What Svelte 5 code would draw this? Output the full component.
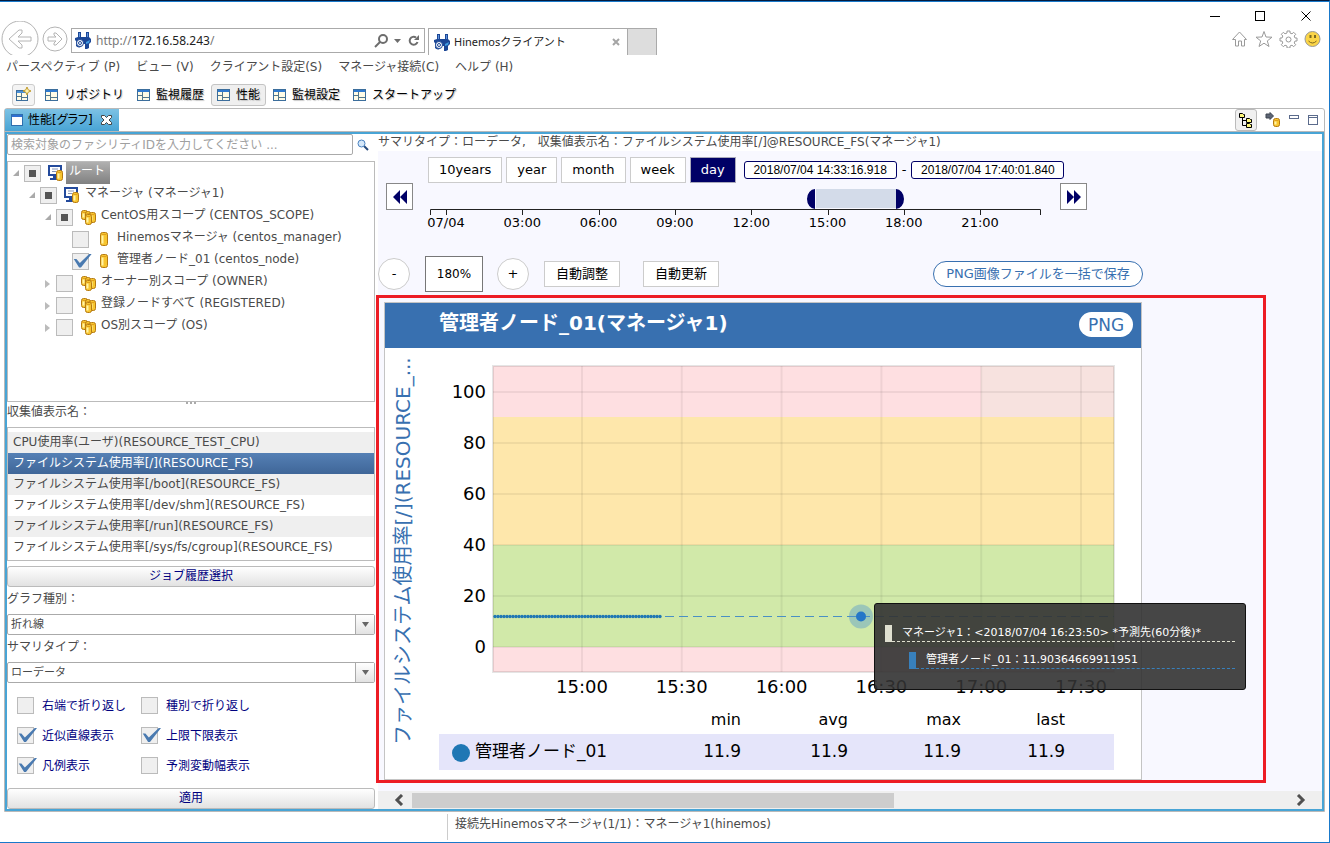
<script>
  const menus = ['パースペクティブ (P)', 'ビュー (V)', 'クライアント設定(S)', 'マネージャ接続(C)', 'ヘルプ (H)'];

  const perspectives = ['リポジトリ', '監視履歴', '性能', '監視設定', 'スタートアップ'];
  let activePerspective = $state('性能');

  let tree = $state([
    { label: 'ルート', depth: 0, open: true, icon: 'server', check: 'some', selected: true },
    { label: 'マネージャ (マネージャ1)', depth: 1, open: true, icon: 'server', check: 'some' },
    { label: 'CentOS用スコープ (CENTOS_SCOPE)', depth: 2, open: true, icon: 'scope', check: 'some' },
    { label: 'Hinemosマネージャ (centos_manager)', depth: 3, icon: 'node', check: 'none' },
    { label: '管理者ノード_01 (centos_node)', depth: 3, icon: 'node', check: 'all' },
    { label: 'オーナー別スコープ (OWNER)', depth: 2, open: false, icon: 'scope', check: 'none' },
    { label: '登録ノードすべて (REGISTERED)', depth: 2, open: false, icon: 'scope', check: 'none' },
    { label: 'OS別スコープ (OS)', depth: 2, open: false, icon: 'scope', check: 'none' }
  ]);

  const metrics = [
    'CPU使用率(ユーザ)(RESOURCE_TEST_CPU)',
    'ファイルシステム使用率[/](RESOURCE_FS)',
    'ファイルシステム使用率[/boot](RESOURCE_FS)',
    'ファイルシステム使用率[/dev/shm](RESOURCE_FS)',
    'ファイルシステム使用率[/run](RESOURCE_FS)',
    'ファイルシステム使用率[/sys/fs/cgroup](RESOURCE_FS)'
  ];
  let metric = $state(1);

  let options = $state([
    { label: '右端で折り返し', on: false },
    { label: '種別で折り返し', on: false },
    { label: '近似直線表示', on: true },
    { label: '上限下限表示', on: true },
    { label: '凡例表示', on: true },
    { label: '予測変動幅表示', on: false }
  ]);

  const ranges = ['10years', 'year', 'month', 'week', 'day'];
  let range = $state('day');

  const dayTicks = ['07/04', '03:00', '06:00', '09:00', '12:00', '15:00', '18:00', '21:00'];

  // Chart scales
  const yTicks = [100, 80, 60, 40, 20, 0];
  const xTicks = ['15:00', '15:30', '16:00', '16:30', '17:00', '17:30'];
  const py = (v) => 299 - v * 2.55;
  const px = (i) => 197 + i * 99.8;
  const samples = Array.from({ length: 56 }, (_, i) => 110 + i * 3);

  const legend = [['min', '11.9'], ['avg', '11.9'], ['max', '11.9'], ['last', '11.9']];
</script>

{#snippet hinemosIcon()}
  <svg class="fixed" width="17" height="17" viewBox="0 0 17 17">
    <path d="M3 0h3v5h5V0h3v5l2 2v3l-2 2v4l-2 1h-2v-5H8a4 4 0 0 1-7 2V9L0 8V6l3-1z" fill="#1c4796" />
    <path d="M4 1h1v4H4zM12 1h1v4h-1z" fill="#5f93dd" />
    <path d="M11 10l4-2-1 3-3 1z" fill="#3f9be0" />
    <circle cx="5" cy="11" r="3.5" fill="#fff" stroke="#1c4796" />
    <circle cx="5" cy="11" r="1.5" fill="none" stroke="#1c4796" />
  </svg>
{/snippet}

{#snippet gridIcon()}
  <svg class="fixed" width="13" height="12" viewBox="0 0 13 12">
    <rect x="0.5" y="0.5" width="12" height="11" fill="#fffbe6" stroke="#3c6e9c" />
    <path d="M1 2h11" stroke="#2f7ad0" stroke-width="2" />
    <path d="M5.5 3v8M1 6.5h4M6 8.5h6" stroke="#54788c" />
  </svg>
{/snippet}

{#snippet cylinder(x, y, w, h)}
  <rect {x} {y} width={w} height={h} rx="2" fill="#f7c52f" stroke="#b67a10" />
  <path d="M{x + 2} {y + 3}v{h - 5}" stroke="#fff3a8" stroke-width="2" />
  <path d="M{x + 1} {y + 2}h{w - 2}" stroke="#e0a01c" />
{/snippet}

{#snippet treeIcon(kind)}
  <svg class="fixed" width="16" height="16" viewBox="0 0 16 16">
    {#if kind === 'server'}
      <rect x="1" y="1" width="12" height="9" fill="#fff" stroke="#234a9c" stroke-width="2" />
      <path d="M4 4h6M4 6.5h4" stroke="#8393b8" />
      <path d="M5 11h4v2H5zM2 13h8v2H2z" fill="#234a9c" />
      {@render cylinder(8.5, 5.5, 6, 10)}
    {:else if kind === 'scope'}
      {@render cylinder(1.5, 1.5, 6, 9)}
      {@render cylinder(5.5, 2.5, 5, 9)}
      {@render cylinder(9.5, 3.5, 6, 10)}
      {@render cylinder(5.5, 5.5, 6, 10)}
    {:else}
      {@render cylinder(4.5, 1.5, 7, 13)}
    {/if}
  </svg>
{/snippet}

<div class="window">
  <header class="browser">
    <button class="plain" aria-label="戻る">
      <svg width="40" height="34" viewBox="0 0 40 34">
        <circle cx="20" cy="18" r="18" fill="#fff" stroke="#b4b4b4" />
        <path d="M9 18l10-9h3v3l-4 4h13v4H18l4 4v3h-3z" fill="#fff" stroke="#b4b4b4" />
      </svg>
    </button>
    <button class="plain forward" aria-label="進む">
      <svg width="26" height="26" viewBox="0 0 26 26">
        <circle cx="13" cy="13" r="12" fill="#fff" stroke="#b4b4b4" />
        <path d="M20 13l-6-6h-2v2l2 2H6v4h8l-2 2v2h2z" fill="#fff" stroke="#b4b4b4" />
      </svg>
    </button>
    <div class="address">
      {@render hinemosIcon()}
      <span class="url">http://<b>172.16.58.243</b>/</span>
      <svg class="fixed" width="46" height="16" viewBox="0 0 46 16" fill="none" stroke="#6d6d6d">
        <circle cx="9" cy="6" r="4" stroke-width="2" />
        <path d="M6 9l-5 5" stroke-width="2" />
        <path d="M20 6h7l-3.5 4z" fill="#6d6d6d" stroke="none" />
        <path d="M42 4.500a4 4 0 1 0 1.500 4.500" stroke-width="2" />
        <path d="M45 2v5h-5z" fill="#6d6d6d" stroke="none" />
      </svg>
    </div>
    <div class="page-tab">
      {@render hinemosIcon()}
      <span>Hinemosクライアント</span>
      <button class="plain" aria-label="タブを閉じる">
        <svg width="8" height="8" viewBox="0 0 8 8"><path d="M1 1l6 6M7 1l-6 6" stroke="#a5a5a5" stroke-width="2" /></svg>
      </button>
    </div>
    <button class="new-tab" aria-label="新しいタブ"></button>
    <div class="window-tools">
      <svg class="controls" width="104" height="12" viewBox="0 0 104 12" fill="none" stroke="#000">
        <path d="M1 6.500h10" />
        <rect x="46.5" y="1.5" width="9" height="9" />
        <path d="M92.5 1.5l9 9M101.5 1.5l-9 9" />
      </svg>
      <svg width="92" height="18" viewBox="0 0 92 18" fill="none" stroke="#9a9a9a">
        <path d="M1.5 9.5l7-7.5 7 7.5h-2V16h-3v-5h-3v5h-3V9.5z" />
        <path d="M33 1.5l2 5.5 6 .2-4.700 3.700 1.700 5.600-5-3.300-5 3.300 1.700-5.600L25 7.200l6-.2z" />
        <path d="M56 1h3v2l2 .8 1.700-1.500 2 2L63.200 6l.8 2h2v3h-2l-.8 2 1.500 1.700-2 2L61 15.200l-2 .8v2h-3v-2l-2-.8-1.700 1.500-2-2L51.800 13l-.8-2h-2V8h2l.8-2-1.500-1.700 2-2L54 3.800l2-.8z" />
        <circle cx="57.5" cy="9.5" r="2.5" />
        <circle cx="81.5" cy="9" r="7.5" fill="#fbd547" />
        <path d="M79.500 5v3M84 5v3" stroke="#7c6a20" stroke-width="2" />
        <path d="M77.5 11q4 4 8 0" stroke="#7c6420" />
      </svg>
    </div>
  </header>

  <nav class="menu">
    {#each menus as item}
      <button class="plain">{item}</button>
    {/each}
  </nav>

  <div class="perspectives">
    <button class="open-perspective" aria-label="パースペクティブを開く">
      <svg width="15" height="15" viewBox="0 0 15 15">
        <rect x="0.5" y="3.5" width="11" height="10" fill="#fffbe6" stroke="#3c6e9c" />
        <path d="M1 5h10" stroke="#4a90d8" stroke-width="2" />
        <path d="M5.5 6v7M1 9.5h4M6 10.5h5" stroke="#54788c" />
        <path d="M11 0l1.200 2.800L15 4l-2.800 1.200L11 8 9.800 5.200 7 4l2.800-1.200z" fill="#fff3b0" stroke="#c09a2c" />
      </svg>
    </button>
    {#each perspectives as name}
      <button class="perspective" class:active={name === activePerspective} onclick={() => (activePerspective = name)}>
        {@render gridIcon()}
        <span>{name}</span>
      </button>
    {/each}
  </div>

  <div class="view">
    <div class="view-tabs">
      <div class="view-tab">
        <svg class="fixed" width="12" height="12" viewBox="0 0 12 12">
          <rect x="0.5" y="0.5" width="11" height="11" fill="#fff" stroke="#2f6fae" />
          <path d="M1 2h10" stroke="#2f6fd0" stroke-width="2" />
        </svg>
        <span>性能[グラフ]</span>
        <button class="plain" aria-label="閉じる">
          <svg width="11" height="10" viewBox="0 0 11 10">
            <path d="M.5.5h3l2 2 2-2h3v2L8 5l2.5 2.5v2h-3l-2-2-2 2h-3v-2L3 5 .5 2.5z" fill="#fff" stroke="#444" />
          </svg>
        </button>
      </div>
      <div class="view-tools">
        <button class="tree-toggle" aria-label="ツリー表示">
          <svg width="14" height="16" viewBox="0 0 14 16" fill="#fdf77a" stroke="#000">
            <path d="M.5 1.5h3l1 1h1v3h-5z" />
            <path d="M7.5 6.5h3l1 1h1v3h-5zM7.5 11.5h3l1 1h1v3h-5z" />
            <path d="M3.5 6v7.5H7M3.5 8.5H7" fill="none" />
          </svg>
        </button>
        <svg width="16" height="16" viewBox="0 0 16 16">
          <path d="M1 2h4V.500L8.500 4 5 7.500V6H1z" fill="#5c6473" stroke="#3d4450" />
          {@render cylinder(8.5, 6.5, 6, 8)}
        </svg>
        <svg width="11" height="14" viewBox="0 0 11 14"><rect x="0.5" y="2.5" width="9" height="3" fill="#fff" stroke="#5b6b8c" /></svg>
        <svg width="11" height="14" viewBox="0 0 11 14">
          <rect x="0.5" y="2.5" width="9" height="9" fill="#fff" stroke="#5b6b8c" />
          <path d="M1 4.5h9" stroke="#5b6b8c" />
        </svg>
      </div>
    </div>

    <div class="view-body">
      <aside>
        <div class="search">
          <input type="text" aria-label="検索" placeholder="検索対象のファシリティIDを入力してください ..." />
          <button class="plain" aria-label="検索する">
            <svg width="12" height="12" viewBox="0 0 12 12">
              <path d="M7 7l4 4" stroke="#24497c" stroke-width="2" />
              <circle cx="4.5" cy="4.5" r="3.5" fill="#d5e8fa" stroke="#4a82c0" />
            </svg>
          </button>
        </div>

        <ul class="tree">
          {#each tree as node}
            <li style="padding-left: {5 + node.depth * 16}px">
              <span class="twisty" class:open={node.open} class:closed={node.open === false}></span>
              <input
                type="checkbox"
                aria-label={node.label}
                checked={node.check === 'all'}
                indeterminate={node.check === 'some'}
              />
              {@render treeIcon(node.icon)}
              <span class="node-label" class:selected={node.selected}>{node.label}</span>
            </li>
          {/each}
        </ul>

        <div class="sash"><i></i><i></i><i></i></div>
        <div class="caption">収集値表示名：</div>
        <ul class="metrics">
          {#each metrics as name, i}
            <li class:selected={i === metric}>
              <button class="plain" onclick={() => (metric = i)}>{name}</button>
            </li>
          {/each}
        </ul>

        <button class="wide">ジョブ履歴選択</button>

        <label class="caption" for="graph-type">グラフ種別：</label>
        <div class="combo">
          <select id="graph-type"><option>折れ線</option></select>
        </div>
        <label class="caption" for="summary-type">サマリタイプ：</label>
        <div class="combo">
          <select id="summary-type"><option>ローデータ</option></select>
        </div>

        <div class="options">
          {#each options as option}
            <label><input type="checkbox" bind:checked={option.on} />{option.label}</label>
          {/each}
        </div>

        <button class="wide apply">適用</button>
      </aside>

      <main>
        <div class="summary">サマリタイプ：ローデータ,　収集値表示名：ファイルシステム使用率[/]@RESOURCE_FS(マネージャ1)</div>

        <div class="ranges">
          {#each ranges as name}
            <button class:active={name === range} onclick={() => (range = name)}>{name}</button>
          {/each}
          <div class="dates">
            <input type="text" aria-label="開始日時" value="2018/07/04 14:33:16.918" />
            <span>-</span>
            <input type="text" aria-label="終了日時" value="2018/07/04 17:40:01.840" />
          </div>
        </div>

        <div class="timeline">
          <button aria-label="前へ">
            <svg width="14" height="14" viewBox="0 0 14 14"><path d="M7 0v14L0 7zM14 0v14L7 7z" fill="#006" /></svg>
          </button>
          <svg class="fixed" width="630" height="48" viewBox="0 0 630 48">
            <path d="M10.5 32v-5.500h610V32" fill="none" stroke="#222" />
            {#each dayTicks as tick, i}
              <path d="M{Math.round(26 + i * 76.3) + 0.5} 27v5" stroke="#222" />
              <text x={26 + i * 76.3} y="44" class="day-label">{tick}</text>
            {/each}
            <!-- Selected period -->
            <rect x="396" y="6" width="80" height="19" fill="#d3dbe9" />
            <path d="M395 6v20a8 10 0 0 1 0-20zM476 6v20a8 10 0 0 0 0-20z" fill="#006" />
          </svg>
          <button aria-label="次へ">
            <svg width="14" height="14" viewBox="0 0 14 14"><path d="M0 0v14l7-7zM7 0v14l7-7z" fill="#006" /></svg>
          </button>
        </div>

        <div class="zoom-row">
          <button class="round">-</button>
          <div class="zoom-value">180%</div>
          <button class="round">+</button>
          <button class="auto">自動調整</button>
          <button class="auto update">自動更新</button>
          <button class="save-all">PNG画像ファイルを一括で保存</button>
        </div>

        <section class="highlight">
          <article class="card">
            <header>
              <h2>管理者ノード_01(マネージャ1)</h2>
              <button>PNG</button>
            </header>
            <div class="chart">
              <svg width="756" height="358" viewBox="0 0 756 358">
                <text class="y-title" transform="translate(25 397) rotate(-90)">ファイルシステム使用率[/](RESOURCE_...</text>

                <!-- Threshold bands -->
                <rect x="108" y="18" width="621" height="306" fill="#fedfe1" />
                <rect x="596" y="18" width="133" height="51" fill="#f7e2df" />
                <rect x="108" y="69" width="621" height="128" fill="#fee7ab" />
                <rect x="108" y="197" width="621" height="102" fill="#d1e9a9" />

                {#each yTicks as v}
                  <path d="M108 {py(v)}h621" class="grid" />
                  <text x="101" y={py(v) + 6} class="tick y">{v}</text>
                {/each}
                {#each xTicks as label, i}
                  <path d="M{px(i)} 18v306" class="grid" />
                  <text x={px(i)} y="345" class="tick x">{label}</text>
                {/each}
                <rect x="108" y="18" width="621" height="306" class="frame" />

                <!-- Forecast and samples -->
                <path d="M280 268.5h449" stroke="#4a90c4" stroke-dasharray="9 5" />
                {#each samples as x}
                  <circle cx={x} cy="268.5" r="1.7" fill="#1f77b4" />
                {/each}
                <circle cx="476" cy="268.5" r="12" fill="#4a90d0" fill-opacity="0.4" />
                <circle cx="476" cy="268.5" r="5" fill="#2576c8" />
              </svg>

              <div class="tooltip">
                <div class="tip manager"><span>マネージャ1：&lt;2018/07/04 16:23:50&gt; *予測先(60分後)*</span></div>
                <div class="tip node"><span>管理者ノード_01：11.90364669911951</span></div>
              </div>
            </div>

            <table>
              <thead>
                <tr>
                  <th></th>
                  {#each legend as [name]}<th>{name}</th>{/each}
                  <th class="end"></th>
                </tr>
              </thead>
              <tbody>
                <tr>
                  <td class="series"><i></i>管理者ノード_01</td>
                  {#each legend as [, value]}<td>{value}</td>{/each}
                  <td class="end"></td>
                </tr>
              </tbody>
            </table>
          </article>
        </section>

        <div class="scrollbar">
          <svg width="10" height="12" viewBox="0 0 10 12"><path d="M8 1L3 6l5 5" fill="none" stroke="#505050" stroke-width="3" /></svg>
          <div class="track"><div class="thumb"></div></div>
          <svg width="10" height="12" viewBox="0 0 10 12"><path d="M2 1l5 5-5 5" fill="none" stroke="#505050" stroke-width="3" /></svg>
        </div>
      </main>
    </div>
  </div>

  <footer><span>接続先Hinemosマネージャ(1/1)：マネージャ1(hinemos)</span></footer>
</div>

<style>
  :global(body) {
    margin: 0;
    background: #fff;
  }

  .window, .window * {
    box-sizing: border-box;
  }

  .window {
    min-height: 100vh;
    display: flex;
    flex-direction: column;
    border-top: 1px solid #031b3f;
    border-right: 1px solid #1979ca;
    border-bottom: 1px solid #1979ca;
    box-shadow: inset 0 1px #1979ca;
    padding-top: 1px;
    font: 12px/16px 'DejaVu Sans', 'Noto Sans CJK JP', sans-serif;
    color: #4a4a4a;
    white-space: nowrap;
  }

  button, input, select {
    font: inherit;
    color: inherit;
    margin: 0;
    padding: 0;
  }

  ul {
    list-style: none;
    margin: 0;
    padding: 0;
  }

  svg {
    display: block;
  }

  .fixed {
    flex: none;
  }

  .plain {
    border: 0;
    background: none;
    text-align: left;
  }

  /* Browser frame */
  .browser {
    display: flex;
    align-items: flex-end;
    height: 53px;
    font-family: 'Noto Sans', 'Noto Sans CJK JP', sans-serif;
  }

  .forward {
    margin: 0 3px 3px 2px;
  }

  .address {
    display: flex;
    align-items: center;
    width: 354px;
    height: 25px;
    margin-bottom: 2px;
    padding: 0 4px 0 3px;
    border: 1px solid #aaa;
    gap: 4px;
  }

  .url {
    flex: 1;
    color: #777;
  }

  .url b {
    font-weight: 400;
    color: #222;
  }

  .page-tab {
    display: flex;
    align-items: center;
    width: 200px;
    height: 27px;
    margin-left: 3px;
    padding: 0 7px 0 5px;
    gap: 3px;
    border: 1px solid #aaa;
    border-bottom: 0;
    color: #222;
    font-size: 11px;
  }

  .page-tab span {
    flex: 1;
  }

  .new-tab {
    width: 29px;
    height: 27px;
    border: 1px solid #aaa;
    border-width: 1px 1px 0 0;
    background: #ddd;
  }

  .window-tools {
    display: flex;
    flex-direction: column;
    align-items: flex-end;
    gap: 8px;
    margin-left: auto;
    padding: 0 6px 7px 0;
  }

  .controls {
    margin-right: 10px;
  }

  .menu {
    display: flex;
    align-items: center;
    gap: 16px;
    height: 24px;
    padding-left: 6px;
  }

  .perspectives {
    display: flex;
    align-items: center;
    gap: 1px;
    height: 29px;
    padding: 2px 0 0 12px;
    color: #000;
  }

  .open-perspective,
  .perspective {
    display: flex;
    align-items: center;
    justify-content: center;
    height: 22px;
    border: 1px solid transparent;
    border-radius: 3px;
    background: none;
  }

  .open-perspective {
    width: 23px;
    margin-right: 3px;
    border-color: #ccc;
    background: #f4f4f4;
  }

  .perspective {
    padding: 0 5px;
    gap: 6px;
    text-shadow: 1px 1px 1px #bbb;
  }

  .perspective.active {
    border-color: #c4c4c4;
    background: #efefef;
  }

  /* View with its tab strip */
  .view {
    flex: 1;
    display: flex;
    flex-direction: column;
    margin: 0 4px;
    border: 1px solid #b9b9b9;
    border-radius: 3px 3px 0 0;
  }

  .view-tabs {
    display: flex;
    justify-content: space-between;
    height: 23px;
    border-bottom: 1px solid #b9b9b9;
  }

  .view-tab {
    display: flex;
    align-items: center;
    gap: 5px;
    padding: 0 7px 0 6px;
    background: linear-gradient(#7dc2e4, #48a4d5);
    color: #000;
    font-feature-settings: 'palt';
  }

  .view-tab button {
    margin-left: 3px;
  }

  .view-tools {
    display: flex;
    align-items: center;
    gap: 8px;
    padding-right: 5px;
  }

  .tree-toggle {
    display: grid;
    place-items: center;
    width: 22px;
    height: 22px;
    border: 1px solid #bbb;
    border-radius: 3px;
    background: #f0f0f0;
  }

  .view-body {
    flex: 1;
    display: flex;
    border: 2px solid #48a4d5;
  }

  aside {
    display: flex;
    flex-direction: column;
    width: 368px;
    margin-right: 3px;
    flex: none;
  }

  .search {
    display: flex;
    align-items: center;
    gap: 4px;
  }

  .search input {
    width: 346px;
    height: 21px;
    padding: 0 3px;
    border: 1px solid #aaa;
    border-radius: 2px;
  }

  .search input::placeholder {
    color: #a0a0a0;
  }

  .tree {
    height: 241px;
    margin-top: 6px;
    border: 1px solid #bbb;
  }

  .tree li {
    display: flex;
    align-items: center;
    height: 22px;
  }

  .tree svg {
    margin: 0 5px 0 7px;
  }

  .twisty {
    width: 11px;
    height: 6px;
  }

  .twisty.open::before,
  .twisty.closed::before {
    content: '';
    display: block;
    width: 6px;
    height: 6px;
    background: #aaa;
    clip-path: polygon(100% 0, 100% 100%, 0 100%);
  }

  .twisty.closed::before {
    width: 5px;
    height: 8px;
    background: #bbb;
    clip-path: polygon(0 0, 100% 50%, 0 100%);
  }

  .node-label {
    height: 22px;
    line-height: 19px;
  }

  .node-label.selected {
    padding: 0 5px 0 3px;
    margin-left: -3px;
    color: #fff;
    background: linear-gradient(#b0b0b0, #808080);
  }

  input[type='checkbox'] {
    appearance: none;
    flex: none;
    width: 17px;
    height: 17px;
    border: 1px solid #bbb;
    background: #efefef;
  }

  input[type='checkbox']:checked::before {
    content: '';
    display: block;
    width: 19px;
    height: 14px;
    background: #4a7ab0;
    clip-path: polygon(4% 40%, 18% 40%, 36% 68%, 88% 0, 100% 0, 42% 100%, 32% 100%);
  }

  input[type='checkbox']:indeterminate::before {
    content: '';
    display: block;
    width: 7px;
    height: 7px;
    margin: 4px;
    background: #555;
  }

  .sash {
    display: flex;
    justify-content: center;
    gap: 2px;
    height: 2px;
  }

  .sash i {
    width: 2px;
    background: #aaa;
  }

  .caption {
    height: 27px;
    line-height: 17px;
  }

  .metrics {
    height: 134px;
    margin-top: -4px;
    padding-top: 4px;
    border: 1px solid #bbb;
  }

  .metrics li {
    height: 21px;
    padding-left: 5px;
    line-height: 21px;
  }

  .metrics li:nth-child(odd) {
    background: #efefef;
  }

  .metrics li.selected {
    color: #fff;
    background: linear-gradient(#5580b5, #3f6698);
  }

  .wide {
    height: 21px;
    margin: 5px 0 4px;
    border: 1px solid #bbb;
    border-radius: 3px;
    background: linear-gradient(#fff, #e2e2e2);
    color: #00007f;
    line-height: 17px;
  }

  label.caption {
    height: 23px;
  }

  .combo {
    position: relative;
    height: 21px;
    margin-bottom: 4px;
  }

  .combo select {
    appearance: none;
    width: 100%;
    height: 21px;
    padding-left: 3px;
    border: 1px solid #aaa;
    border-radius: 2px;
    background: #fff;
    font-size: 11px;
  }

  .combo::before {
    content: '';
    position: absolute;
    top: 1px;
    right: 1px;
    width: 18px;
    height: 19px;
    border-left: 1px solid #aaa;
    background: linear-gradient(#fff, #e2e2e2);
    pointer-events: none;
  }

  .combo::after {
    content: '';
    position: absolute;
    top: 8px;
    right: 6px;
    width: 7px;
    height: 5px;
    background: #666;
    clip-path: polygon(0 0, 100% 0, 50% 100%);
    pointer-events: none;
  }

  .options {
    display: grid;
    grid-template-columns: 124px 1fr;
    gap: 13px 0;
    margin-top: 10px;
    padding-left: 10px;
    color: #00007f;
  }

  .options label {
    display: flex;
    align-items: center;
    gap: 8px;
    height: 17px;
  }

  .apply {
    margin: auto 0 0;
  }

  /* Graph pane */
  main {
    flex: 1;
    min-width: 0;
    display: flex;
    flex-direction: column;
    background: #f8f8ff;
  }

  .summary {
    height: 17px;
    line-height: 17px;
    background: #fff;
  }

  .ranges {
    display: flex;
    align-items: center;
    gap: 4px;
    height: 26px;
    margin: 6px 0 0 50px;
    color: #000;
    font-size: 13px;
  }

  .ranges button {
    height: 26px;
    padding: 0 10px;
    border: 1px solid #ccc;
    background: #fff;
  }

  .ranges button.active {
    border-color: #aab;
    background: #006;
    color: #fff;
  }

  .dates {
    display: flex;
    align-items: center;
    gap: 5px;
    margin-left: 4px;
  }

  .dates input {
    width: 153px;
    height: 18px;
    border: 1px solid #006;
    border-radius: 3px;
    background: #fff;
    text-align: center;
    font: 12px/16px 'Liberation Sans', Arial, sans-serif;
  }

  .timeline {
    display: flex;
    align-items: flex-start;
    padding-left: 8px;
    gap: 7px;
  }

  .timeline button {
    display: grid;
    place-items: center;
    width: 27px;
    height: 27px;
    border: 1px solid #888;
    background: #fff;
  }

  .timeline button:last-child {
    margin-left: 3px;
  }

  .day-label {
    font-size: 13px;
    text-anchor: middle;
    fill: #000;
  }

  .zoom-row {
    display: flex;
    align-items: center;
    gap: 15px;
    height: 36px;
    margin-top: 25px;
    color: #000;
  }

  .round {
    width: 32px;
    height: 32px;
    border: 1px solid #ccc;
    border-radius: 50%;
    background: #fff;
    font-size: 13px;
  }

  .zoom-value {
    width: 58px;
    height: 36px;
    margin-right: -1px;
    border: 1px solid #777;
    background: #fff;
    line-height: 34px;
    text-align: center;
  }

  .auto {
    width: 76px;
    height: 26px;
    border: 1px solid #ccc;
    background: #fff;
    font-size: 13px;
  }

  .update {
    margin-left: 8px;
  }

  .save-all {
    width: 210px;
    height: 26px;
    margin-left: 199px;
    border: 1px solid #3870b0;
    border-radius: 13px;
    background: #fff;
    color: #3870b0;
    font-size: 13px;
  }

  .highlight {
    width: 890px;
    margin: 3px 0 8px -2px;
    padding: 4px 5px 0;
    border: 3px solid #ed1c24;
  }

  .card {
    width: 758px;
    border: 1px solid #c4c4c4;
    background: #fff;
    color: #000;
  }

  .card header {
    display: flex;
    align-items: center;
    justify-content: space-between;
    height: 45px;
    padding: 0 8px 2px 54px;
    background: #3870b0;
  }

  .card h2 {
    margin: 0;
    padding-bottom: 4px;
    color: #fff;
    font-size: 20px;
    line-height: 24px;
  }

  .card header button {
    width: 54px;
    height: 25px;
    border: 0;
    border-radius: 13px;
    background: #fff;
    color: #3870b0;
    font-size: 17px;
    line-height: 20px;
  }

  .chart {
    position: relative;
  }

  .chart svg {
    overflow: visible;
  }

  .y-title {
    font-size: 20px;
    fill: #3870b0;
  }

  .grid {
    stroke: #000;
    stroke-opacity: 0.06;
    stroke-width: 2;
  }

  .frame {
    fill: none;
    stroke: #000;
    stroke-opacity: 0.1;
    stroke-width: 2;
  }

  .tick {
    font-size: 18px;
    fill: #000;
  }

  .tick.x {
    text-anchor: middle;
  }

  .tick.y {
    text-anchor: end;
  }

  .tooltip {
    position: absolute;
    left: 489px;
    top: 255px;
    width: 372px;
    height: 87px;
    padding: 21px 10px 0;
    border: 1px solid #111;
    border-radius: 3px;
    background: rgba(50, 50, 50, 0.9);
    color: #fff;
    font-size: 11px;
  }

  .tip {
    height: 17px;
    padding-left: 10px;
    border-left: 7px solid #dfe0d0;
    line-height: 15px;
  }

  .tip span {
    display: block;
    height: 17px;
    margin-left: -10px;
    padding-left: 10px;
    border-bottom: 1px dashed #dfe0d0;
  }

  .tip.node {
    margin: 10px 0 0 24px;
    border-left-color: #3880bc;
  }

  .tip.node span {
    border-bottom-color: #3880bc;
  }

  table {
    width: 675px;
    margin: 0 0 9px 54px;
    border-collapse: collapse;
    table-layout: fixed;
    font-size: 17px;
  }

  th, td {
    width: 107px;
    padding: 0;
    font-weight: 400;
    text-align: right;
  }

  th {
    height: 28px;
    font-size: 16px;
    line-height: 28px;
  }

  th:first-child {
    width: 195px;
  }

  th:nth-child(4) {
    width: 113px;
  }

  th:nth-child(5) {
    width: 104px;
  }

  .end {
    width: 49px;
  }

  tbody tr {
    background: #e5e5fa;
  }

  td {
    height: 36px;
    padding-bottom: 2px;
    line-height: 30px;
  }

  .series {
    text-align: left;
    padding-left: 13px;
  }

  .series i {
    display: inline-block;
    width: 18px;
    height: 18px;
    margin-right: 5px;
    border-radius: 50%;
    background: #1f77b4;
    vertical-align: -5px;
  }

  .scrollbar {
    display: flex;
    align-items: center;
    height: 18px;
    margin-top: auto;
    padding: 0 16px;
    background: #efefef;
  }

  .track {
    flex: 1;
    padding-top: 2px;
    margin: 0 8px;
    height: 18px;
  }

  .thumb {
    width: 55%;
    height: 15px;
    background: #cdcdcd;
  }

  footer {
    height: 30px;
    padding: 2px 0 2px 447px;
  }

  footer span {
    display: block;
    height: 26px;
    padding-left: 7px;
    border-left: 1px solid #ccc;
    line-height: 20px;
  }
</style>
